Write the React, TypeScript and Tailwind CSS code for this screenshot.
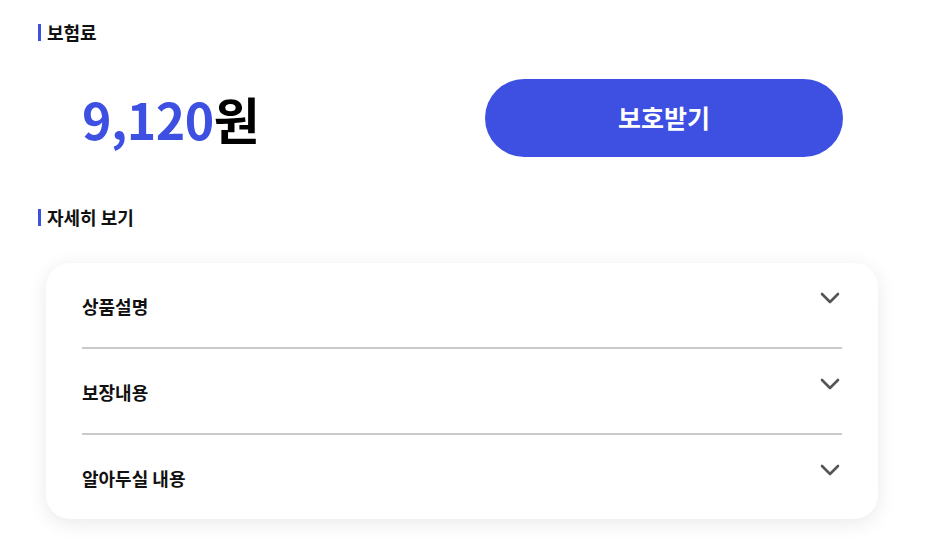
const BLUE = 'bg-[#3e50e1]';

function SectionTitle({ title }: { title: string }) {
    return (
        <div className="flex items-center h-[20px]">
            <span className={`w-[3px] h-[17px] ${BLUE}`} />
            <h2 className="ml-[6px] text-[18px] font-bold text-[#111] leading-none">{title}</h2>
        </div>
    );
}

function Chevron() {
    return (
        <svg width="20" height="12" viewBox="0 0 20 12" fill="none">
            <polyline points="2,2 10,10 18,2" stroke="#555" strokeWidth="2.6" strokeLinecap="round" strokeLinejoin="round" />
        </svg>
    );
}

const items = ['상품설명', '보장내용', '알아두실 내용'];

export default function App() {
    return (
        <div
            className="w-[928px] h-[552px] bg-white px-[38px] pt-[22px]"
            style={{ fontFamily: '"Noto Sans CJK KR", "Noto Sans", sans-serif' }}
        >
            <SectionTitle title="보험료" />

            <div className="flex items-center mt-[37px]">
                <div className="w-[447px] pl-[44px] text-[50px] font-bold leading-none tracking-[-0.5px]">
                    <span className="text-[#3e50e1]">9,120</span>
                    <span className="text-black">원</span>
                </div>
                <button className={`w-[358px] h-[78px] rounded-full ${BLUE} text-white text-[25px] font-bold`}>
                    보호받기
                </button>
            </div>

            <div className="mt-[50px]">
                <SectionTitle title="자세히 보기" />
            </div>

            <div className="ml-[8px] mt-[36px] w-[832px] bg-white rounded-[24px] shadow-[0_4px_20px_rgba(0,0,0,0.09)] px-[36px]">
                {items.map((label, i) => (
                    <div
                        key={label}
                        className={`relative flex items-center ${i < items.length - 1 ? 'h-[86px] border-b-2 border-[#cacaca]' : 'h-[84px]'}`}
                    >
                        <span className="text-[18px] font-bold text-[#111] mt-[2px]">{label}</span>
                        <span className="absolute right-[2px] top-[29px]">
                            <Chevron />
                        </span>
                    </div>
                ))}
            </div>
        </div>
    );
}
